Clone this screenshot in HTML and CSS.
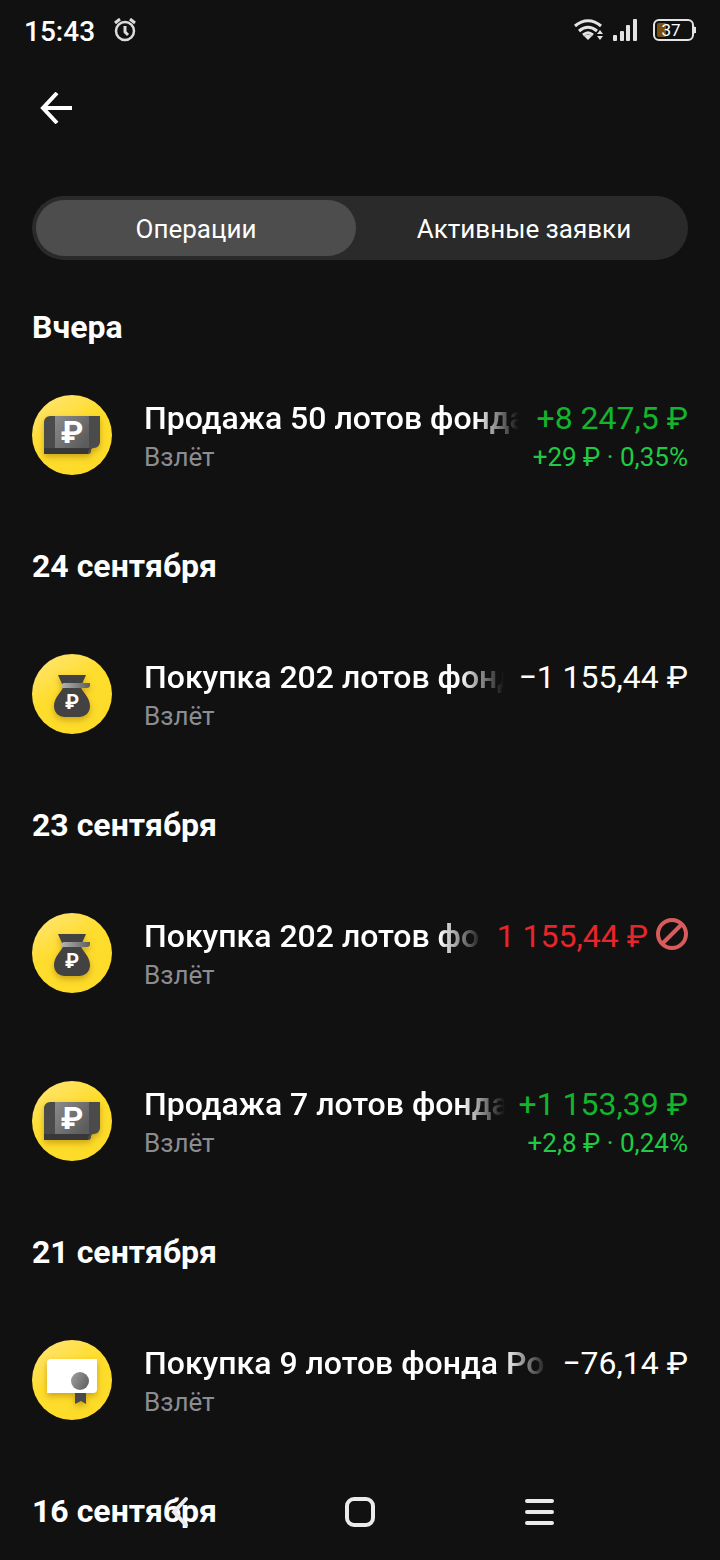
FILE: index.html
```html
<!DOCTYPE html>
<html lang="ru">
<head>
    <meta charset="UTF-8">
    <meta name="viewport" content="width=device-width, initial-scale=1.0">
    <title>Операции</title>
    <link rel="stylesheet" href="styles.css">
</head>
<body>
    <!-- Shared icons -->
    <svg class="icon-defs" aria-hidden="true">
        <defs>
            <linearGradient id="gold" x1="0" y1="0" x2="0.6" y2="1">
                <stop offset="0" stop-color="#ffe680"/>
                <stop offset="0.5" stop-color="#ffdd2d"/>
                <stop offset="1" stop-color="#fddb28"/>
            </linearGradient>
            <linearGradient id="note" x1="0" y1="0" x2="1" y2="0.7">
                <stop offset="0" stop-color="#8b8b8b"/>
                <stop offset="1" stop-color="#5c5c5c"/>
            </linearGradient>
            <linearGradient id="seal" x1="0" y1="0" x2="1" y2="0.5">
                <stop offset="0" stop-color="#a0a0a0"/>
                <stop offset="1" stop-color="#666"/>
            </linearGradient>
            <linearGradient id="band" x1="0" y1="0" x2="1" y2="0">
                <stop offset="0" stop-color="#b4b4b4"/>
                <stop offset="1" stop-color="#5e5e5e"/>
            </linearGradient>
            <filter id="shade" x="-30%" y="-30%" width="160%" height="170%">
                <feDropShadow dx="0" dy="3" stdDeviation="3" flood-color="#9a6c00" flood-opacity="0.5"/>
            </filter>
        </defs>
        <symbol id="icon-sell" viewBox="0 0 80 80">
            <circle cx="40" cy="40" r="40" fill="url(#gold)"/>
            <g filter="url(#shade)">
                <path d="M12 27a6 6 0 0 1 6-6h50v26a6 6 0 0 1-6 6 3 3 0 0 0-3 3 3 3 0 0 1-3 3H12z" fill="#4c4c4c"/>
                <path d="M12 53h47a6 6 0 0 0-3 6H12z" fill="#393939"/>
            </g>
            <path d="M23 21h34v32H23z" fill="url(#note)"/>
        </symbol>
        <symbol id="icon-buy" viewBox="0 0 80 80">
            <circle cx="40" cy="40" r="40" fill="url(#gold)"/>
            <g filter="url(#shade)">
                <path d="M26 21h28l-4 9H30z" fill="#424242"/>
                <path d="M31 33h18c1 5 9 10 9 19 0 7-5 11-11 11H33c-6 0-11-4-11-11 0-9 8-14 9-19z" fill="#424242"/>
                <path d="M31 29h27v2a3 3 0 0 1-3 3H29z" fill="url(#band)"/>
            </g>
        </symbol>
        <symbol id="icon-bond" viewBox="0 0 80 80">
            <circle cx="40" cy="40" r="40" fill="url(#gold)"/>
            <g filter="url(#shade)">
                <path d="M43 50h11v14l-5-3-6 3z" fill="#484848"/>
                <path d="M19 19h46v30a4 4 0 0 1-4 4H15V23a4 4 0 0 1 4-4z" fill="#fff"/>
            </g>
            <circle cx="48" cy="41" r="9" fill="url(#seal)"/>
        </symbol>
    </svg>

    <div class="status-bar">
        <span class="clock">15:43</span>
        <svg class="alarm" width="22" height="24" viewBox="0 0 22 24" fill="none" stroke="#dcdcdc" stroke-width="2">
            <circle cx="11" cy="13" r="9" stroke-width="2.5"/>
            <path d="M1 5l5-4M21 5l-5-4" stroke-width="3"/>
            <path d="M11 8v6l3 3" stroke-width="3"/>
        </svg>
        <div class="status-icons">
            <svg width="30" height="22" viewBox="0 0 30 22" fill="none" stroke="#e4e4e4" stroke-width="3">
                <path d="M1 7c8-7 18-7 26 0"/>
                <path d="M5 12c6-5 12-5 18 0"/>
                <path d="M9 16c4-3 6-3 10 0"/>
                <path d="M10 17q4-3 8 0l-4 4z" fill="#e4e4e4" stroke="none"/>
                <path d="M23 15l3-4 3 4zM23 17l3 4 3-4z" fill="#e4e4e4" stroke="none"/>
            </svg>
            <svg class="signal" width="24" height="22" viewBox="0 0 24 22" fill="#e4e4e4">
                <rect x="0" y="16" width="4" height="6" rx="1"/>
                <rect x="7" y="12" width="4" height="10" rx="1"/>
                <rect x="13" y="6" width="4" height="16" rx="1"/>
                <rect x="20" y="0" width="4" height="22" rx="1"/>
            </svg>
            <svg class="battery" width="44" height="22" viewBox="0 0 44 22">
                <rect x="2" y="1" width="39" height="20" rx="5" fill="none" stroke="#e4e4e4" stroke-width="2"/>
                <path d="M7 4h7v14H7a2 2 0 0 1-2-2V6a2 2 0 0 1 2-2z" fill="#7a5210"/>
                <path d="M42 8a3 3 0 0 1 0 6z" fill="#e4e4e4" stroke="#e4e4e4"/>
                <text class="battery-text" x="19" y="17">37</text>
            </svg>
        </div>
    </div>

    <header class="header">
        <button class="back" type="button" aria-label="Назад">
            <svg width="34" height="32" viewBox="0 0 34 32" fill="none" stroke="#fff" stroke-width="4">
                <path d="M18 1L4 16l14 15M4 16h29"/>
            </svg>
        </button>
    </header>

    <main class="content">
        <div class="tabs">
            <button class="tab active" type="button">Операции</button>
            <button class="tab" type="button">Активные заявки</button>
        </div>

        <h2 class="date">Вчера</h2>
        <a class="operation" href="#">
            <svg class="logo" viewBox="0 0 80 80">
                <use href="#icon-sell"/>
                <text class="note-ruble" x="40" y="48">₽</text>
            </svg>
            <div class="info">
                <div class="name">Продажа 50 лотов фонда</div>
                <div class="fund">Взлёт</div>
            </div>
            <div class="amount income">
                <div class="sum">+8 247,5 ₽</div>
                <div class="profit">+29 ₽ · 0,35%</div>
            </div>
        </a>

        <h2 class="date">24 сентября</h2>
        <a class="operation" href="#">
            <svg class="logo" viewBox="0 0 80 80">
                <use href="#icon-buy"/>
                <text class="bag-ruble" x="40" y="55">₽</text>
            </svg>
            <div class="info">
                <div class="name">Покупка 202 лотов фонд</div>
                <div class="fund">Взлёт</div>
            </div>
            <div class="amount">
                <div class="sum">−1 155,44 ₽</div>
            </div>
        </a>

        <h2 class="date">23 сентября</h2>
        <a class="operation" href="#">
            <svg class="logo" viewBox="0 0 80 80">
                <use href="#icon-buy"/>
                <text class="bag-ruble" x="40" y="55">₽</text>
            </svg>
            <div class="info">
                <div class="name">Покупка 202 лотов фо</div>
                <div class="fund">Взлёт</div>
            </div>
            <div class="amount rejected">
                <div class="sum">1 155,44 ₽</div>
                <svg width="32" height="32" viewBox="0 0 32 32" fill="none" stroke="#d95c5c" stroke-width="4">
                    <circle cx="16" cy="16" r="14"/>
                    <path d="M6 26L26 6"/>
                </svg>
            </div>
        </a>
        <a class="operation" href="#">
            <svg class="logo" viewBox="0 0 80 80">
                <use href="#icon-sell"/>
                <text class="note-ruble" x="40" y="48">₽</text>
            </svg>
            <div class="info">
                <div class="name">Продажа 7 лотов фонда</div>
                <div class="fund">Взлёт</div>
            </div>
            <div class="amount income">
                <div class="sum">+1 153,39 ₽</div>
                <div class="profit">+2,8 ₽ · 0,24%</div>
            </div>
        </a>

        <h2 class="date">21 сентября</h2>
        <a class="operation" href="#">
            <svg class="logo" viewBox="0 0 80 80">
                <use href="#icon-bond"/>
            </svg>
            <div class="info">
                <div class="name">Покупка 9 лотов фонда Ро</div>
                <div class="fund">Взлёт</div>
            </div>
            <div class="amount">
                <div class="sum">−76,14 ₽</div>
            </div>
        </a>

        <h2 class="date">16 сентября</h2>
    </main>

    <!-- System navigation over the list -->
    <nav class="nav-bar">
        <button type="button" aria-label="Назад">
            <svg width="30" height="32" viewBox="0 0 30 32" fill="none" stroke="#ebebeb" stroke-width="4" stroke-linecap="round">
                <path d="M21 3L9 16l12 13"/>
            </svg>
        </button>
        <button type="button" aria-label="Домой">
            <svg width="30" height="30" viewBox="0 0 30 30" fill="none" stroke="#ebebeb" stroke-width="4">
                <rect x="2" y="2" width="26" height="26" rx="7"/>
            </svg>
        </button>
        <button type="button" aria-label="Меню">
            <svg width="30" height="28" viewBox="0 0 30 28" fill="none" stroke="#ebebeb" stroke-width="4" stroke-linecap="round">
                <path d="M2 3h25M2 14h25M2 25h25"/>
            </svg>
        </button>
    </nav>
</body>
</html>
```

FILE: styles.css
```css
body {
    margin: 0;
    background-color: #111;
    color: #fff;
    font-family: Roboto, sans-serif;
}

button {
    padding: 0;
    border: none;
    background: none;
    color: inherit;
    font-family: inherit;
    cursor: pointer;
}

svg {
    display: block;
    flex-shrink: 0;
}

.icon-defs {
    position: absolute;
    width: 0;
    height: 0;
}

/* Status bar */
.status-bar {
    display: flex;
    align-items: center;
    gap: 19px;
    height: 60px;
    padding: 0 24px;
}

.clock {
    padding-top: 2px;
    font-size: 28px;
    font-weight: 500;
}

.status-icons {
    display: flex;
    align-items: center;
    gap: 9px;
    margin-left: auto;
}

.battery {
    margin-left: 6px;
}

.battery-text {
    fill: #fff;
    font-size: 17px;
    text-anchor: middle;
}

.header {
    display: flex;
    align-items: center;
    height: 96px;
    padding: 0 39px;
}

.content {
    padding: 40px 32px 0;
}

/* Tabs */
.tabs {
    display: grid;
    grid-template-columns: 1fr 1fr;
    height: 64px;
    margin-bottom: 20px;
    border-radius: 32px;
    background-color: #2a2a2a;
}

.tab {
    margin: 4px;
    padding-top: 2px;
    border-radius: 28px;
    font-size: 26px;
}

.tab.active {
    background-color: #4d4d4d;
}

/* Operations list */
.date {
    margin: 0;
    padding: 28px 0 25px;
    font-size: 32px;
    font-weight: 700;
    line-height: 38px;
}

.tabs + .date {
    padding-bottom: 5px;
}

.operation {
    display: flex;
    padding: 44px 0;
    color: inherit;
    text-decoration: none;
}

.logo {
    width: 80px;
    height: 80px;
    margin-right: 32px;
}

.note-ruble,
.bag-ruble {
    fill: #fff;
    font-weight: 700;
    text-anchor: middle;
}

.note-ruble {
    font-size: 32px;
}

.bag-ruble {
    font-size: 20px;
}

.info {
    flex: 1;
    min-width: 0;
    margin-right: 14px;
}

.name {
    overflow: hidden;
    font-size: 32px;
    font-weight: 500;
    line-height: 46px;
    white-space: nowrap;
    -webkit-mask-image: linear-gradient(to left, transparent, #000 44px);
    mask-image: linear-gradient(to left, transparent, #000 44px);
}

.fund,
.profit {
    font-size: 26px;
    line-height: 32px;
}

.fund {
    color: #8b8d93;
}

.amount {
    text-align: right;
    white-space: nowrap;
}

.sum {
    font-size: 32px;
    line-height: 46px;
}

.income .sum {
    color: #12b52c;
}

.income .profit {
    color: #1fcb44;
}

.rejected {
    display: flex;
    gap: 8px;
    color: #e8252a;
}

.rejected svg {
    margin-top: 5px;
}

/* Navigation */
.nav-bar {
    position: fixed;
    right: 0;
    bottom: 0;
    left: 0;
    display: grid;
    grid-template-columns: repeat(3, 1fr);
    height: 96px;
    padding: 0 12.5%;
}

.nav-bar button {
    display: flex;
    align-items: center;
    justify-content: center;
}
```
